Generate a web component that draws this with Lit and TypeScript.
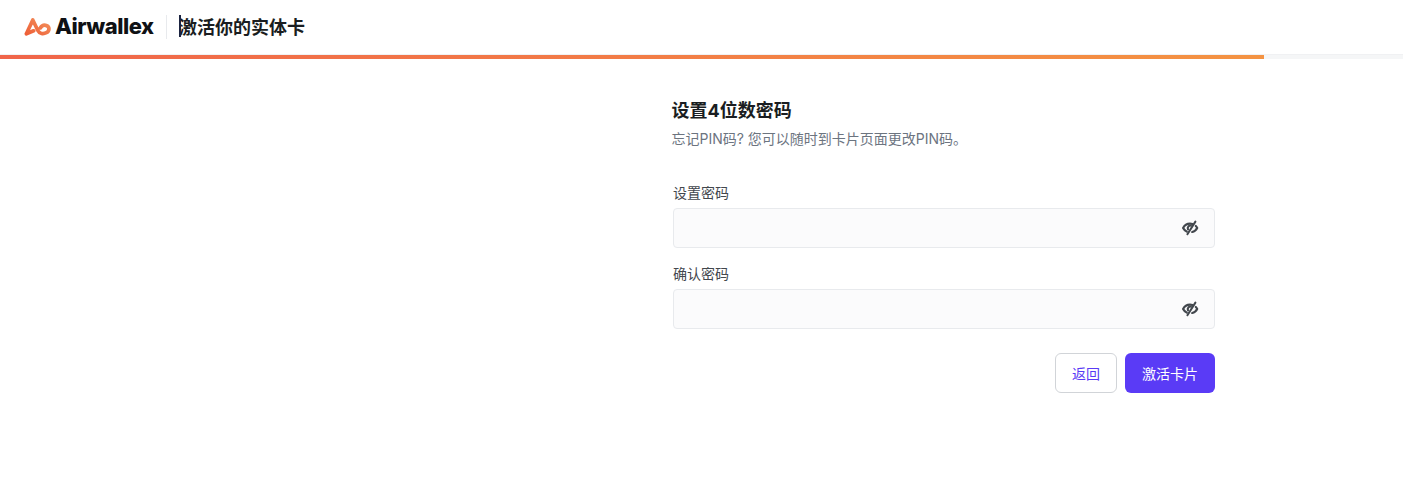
import { LitElement, html, css } from "lit";
import { customElement } from "lit/decorators.js";

const eye = html`<svg class="eye" width="18" height="18" viewBox="0 0 18 18" fill="none" stroke="#42474d" stroke-width="2.2" stroke-linecap="round" stroke-linejoin="round">
  <path d="M5.8 12.6C4 11.6 2.8 10.2 2.1 8.9 3.5 6.2 6 4.6 9 4.6c.8 0 1.6.1 2.4.4"/>
  <path d="M14.8 7c.6.6 1.1 1.2 1.4 1.9-1.1 2.1-2.8 3.6-5 4.1"/>
  <path d="M7 10.4A2.7 2.7 0 0 1 9.9 6.6" stroke-width="2.1"/>
  <path d="M14.4 2.6 6.4 15.2" stroke-width="2"/>
</svg>`;

@customElement("app-root")
export class AppRoot extends LitElement {
  static styles = css`
    :host {
      display: block;
      width: 100%;
      height: 478px;
      background: #fff;
      overflow: hidden;
      font-family: "Inter", "Noto Sans CJK SC", sans-serif;
      color: #1a1d21;
    }
    .header {
      height: 54px;
      display: flex;
      align-items: center;
      padding-left: 24px;
      border-bottom: 1px solid #f0f1f3;
    }
    .brand {
      display: flex;
      align-items: center;
      gap: 3px;
      width: 143px;
      height: 24px;
      border-right: 1px solid #e8eaed;
      box-sizing: border-box;
    }
    .logo {
      display: block;
    }
    .word {
      font-family: "Inter", sans-serif;
      font-weight: 800;
      font-size: 22px;
      letter-spacing: -0.45px;
      color: #0f1114;
      line-height: 22px;
      height: 24px;
    }
    .title {
      position: relative;
      margin-left: 12px;
      font-size: 18px;
      font-family: "Noto Sans CJK SC", sans-serif;
      line-height: 22px;
      height: 24px;
      color: #1a1d21;
      font-weight: 700;
    }
    .caret {
      position: absolute;
      left: 0;
      top: 0;
      width: 2px;
      height: 22px;
      background: #1b2340;
    }
    .track {
      height: 4px;
      background: #f5f6f7;
    }
    .fill {
      height: 100%;
      background: linear-gradient(90deg, #f0654a, #f49342);
    }
    .main {
      padding: 40px 0 0 672px;
      width: 543px;
    }
    h1 {
      margin: 0 0 0 -0.5px;
      font-size: 18px;
      line-height: 24px;
      font-weight: 700;
      color: #1a1d21;
      height: 22px;
    }
    .sub {
      margin: 9px 0 0 -0.5px;
      font-size: 14px;
      line-height: 18px;
      color: #6c747f;
      height: 18px;
    }
    .form {
      margin-top: 35px;
      padding-left: 1px;
    }
    .field {
      display: flex;
      flex-direction: column;
      gap: 6px;
      margin-bottom: 16px;
    }
    .label {
      font-size: 14px;
      line-height: 18px;
      color: #42474d;
      padding-top: 1px;
      box-sizing: border-box;
      height: 19px;
    }
    .input {
      height: 40px;
      box-sizing: border-box;
      background: #fbfbfc;
      border: 1px solid #e8eaed;
      border-radius: 4px;
      display: flex;
      align-items: center;
      justify-content: flex-end;
      padding-right: 15px;
    }
    .eye {
      display: block;
    }
    .actions {
      display: flex;
      justify-content: flex-end;
      gap: 8px;
      margin-top: 24px;
    }
    button {
      height: 40px;
      box-sizing: border-box;
      border-radius: 6px;
      font-family: inherit;
      font-size: 14px;
      padding: 0;
      cursor: pointer;
    }
    .back {
      width: 62px;
      background: #fff;
      border: 1px solid #d1d4d8;
      color: #5a3af5;
    }
    .go {
      width: 90px;
      background: #5a3bf6;
      border: none;
      color: #fff;
    }
  `;

  render() {
    return html`
      <div class="header">
        <div class="brand">
          <svg class="logo" width="28" height="20" viewBox="0 0 28 20" fill="none">
            <defs>
              <linearGradient id="lg" x1="0" y1="1" x2="1" y2="0">
                <stop offset="0" stop-color="#ee6038" />
                <stop offset="1" stop-color="#f2905c" />
              </linearGradient>
            </defs>
            <path d="M2.4 16.8 8.8 3l5.2 10.8c1.4 2.9 5.2 3.6 8.4 1.9 3.2-1.7 3.4-5.6.4-7-2.6-1.2-5-.1-6.5 2.2M2.4 16.8l7.2-3"
              stroke="url(#lg)" stroke-width="3.7" stroke-linecap="round" stroke-linejoin="round" />
          </svg>
          <span class="word">Airwallex</span>
        </div>
        <div class="title"><span class="caret"></span>激活你的实体卡</div>
      </div>
      <div class="track"><div class="fill" style="width: 1264px"></div></div>
      <div class="main">
        <h1>设置4位数密码</h1>
        <p class="sub">忘记PIN码? 您可以随时到卡片页面更改PIN码。</p>
        <div class="form">
          <div class="field">
            <div class="label">设置密码</div>
            <div class="input">${eye}</div>
          </div>
          <div class="field">
            <div class="label">确认密码</div>
            <div class="input">${eye}</div>
          </div>
          <div class="actions">
            <button class="back">返回</button>
            <button class="go">激活卡片</button>
          </div>
        </div>
      </div>
    `;
  }
}
